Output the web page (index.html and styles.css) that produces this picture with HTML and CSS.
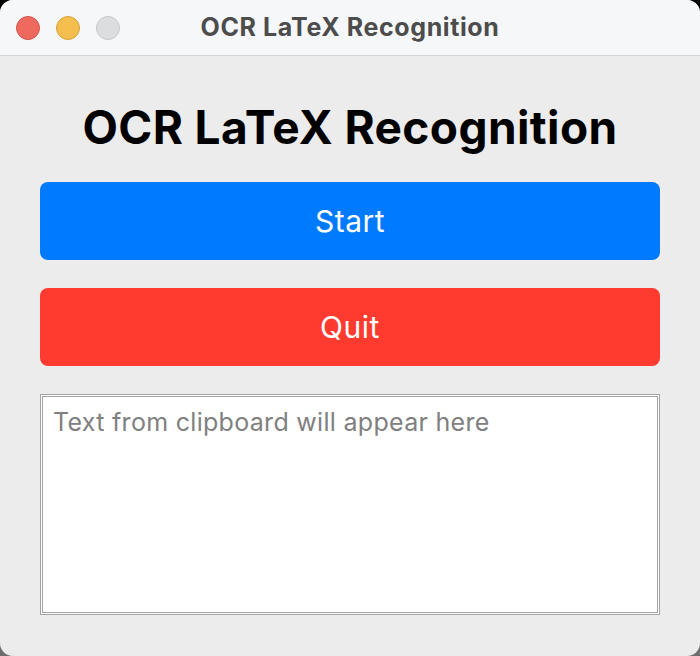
FILE: index.html
```html
<!DOCTYPE html>
<html lang="en">
<head>
<meta charset="utf-8">
<title>OCR LaTeX Recognition</title>
<link rel="stylesheet" href="styles.css">
</head>
<body>
<div class="window">
  <div class="titlebar">
    <div class="lights">
      <span class="light red"></span>
      <span class="light yellow"></span>
      <span class="light gray"></span>
    </div>
    <div class="title">OCR LaTeX Recognition</div>
  </div>
  <div class="content">
    <h1 class="heading">OCR LaTeX Recognition</h1>
    <button class="btn btn-start">Start</button>
    <button class="btn btn-quit">Quit</button>
    <textarea class="output" placeholder="Text from clipboard will appear here"></textarea>
  </div>
</div>
</body>
</html>
```
FILE: styles.css
```css
html, body {
  margin: 0;
  padding: 0;
  width: 700px;
  height: 656px;
  overflow: hidden;
}
body {
  background: linear-gradient(#000 0%, #000 40%, #6e6e6e 100%);
  font-family: Inter, "Liberation Sans", sans-serif;
}
.window {
  width: 700px;
  height: 656px;
  background: #ececec;
  border-radius: 13px;
  overflow: hidden;
  display: flex;
  flex-direction: column;
}
.titlebar {
  height: 56px;
  box-sizing: border-box;
  background: #f6f7f9;
  border-bottom: 1px solid #d4d4d4;
  display: grid;
  grid-template-columns: 1fr auto 1fr;
  align-items: center;
}
.lights {
  display: flex;
  gap: 16px;
  padding-left: 16px;
}
.light {
  width: 22px;
  height: 22px;
  border-radius: 50%;
  border: 1px solid transparent;
}
.red { background: #ee6a5f; border-color: #d0554b; }
.yellow { background: #f5bf4f; border-color: #d6a23a; }
.gray { background: #dcdddf; border-color: #c6c7c9; }
.title {
  font-size: 25px;
  letter-spacing: 0.6px;
  font-weight: 700;
  color: #4c4c4c;
  margin-top: -2px;
}
.content {
  display: flex;
  flex-direction: column;
  padding: 0 40px;
}
.heading {
  margin: 46px 0 0;
  text-align: center;
  font-size: 46px;
  letter-spacing: 0.4px;
  line-height: 50px;
  font-weight: 700;
  color: #000;
}
.btn {
  display: block;
  width: 100%;
  height: 78px;
  border: none;
  border-radius: 8px;
  color: #fff;
  font-family: Inter, "Liberation Sans", sans-serif;
  font-size: 30px;
  letter-spacing: 0.5px;
  padding: 0;
}
.btn-start { background: #007aff; margin-top: 30px; }
.btn-quit { background: #ff3b30; margin-top: 28px; }
.output {
  margin-top: 28px;
  height: 221px;
  box-sizing: border-box;
  width: 100%;
  border: 3px double #a3a3a3;
  background: #fff;
  resize: none;
  padding: 10px 10px;
  font-family: Inter, "Liberation Sans", sans-serif;
  font-size: 25px;
  letter-spacing: 0.3px;
  color: #000;
}
.output::placeholder {
  color: #808080;
}
```
